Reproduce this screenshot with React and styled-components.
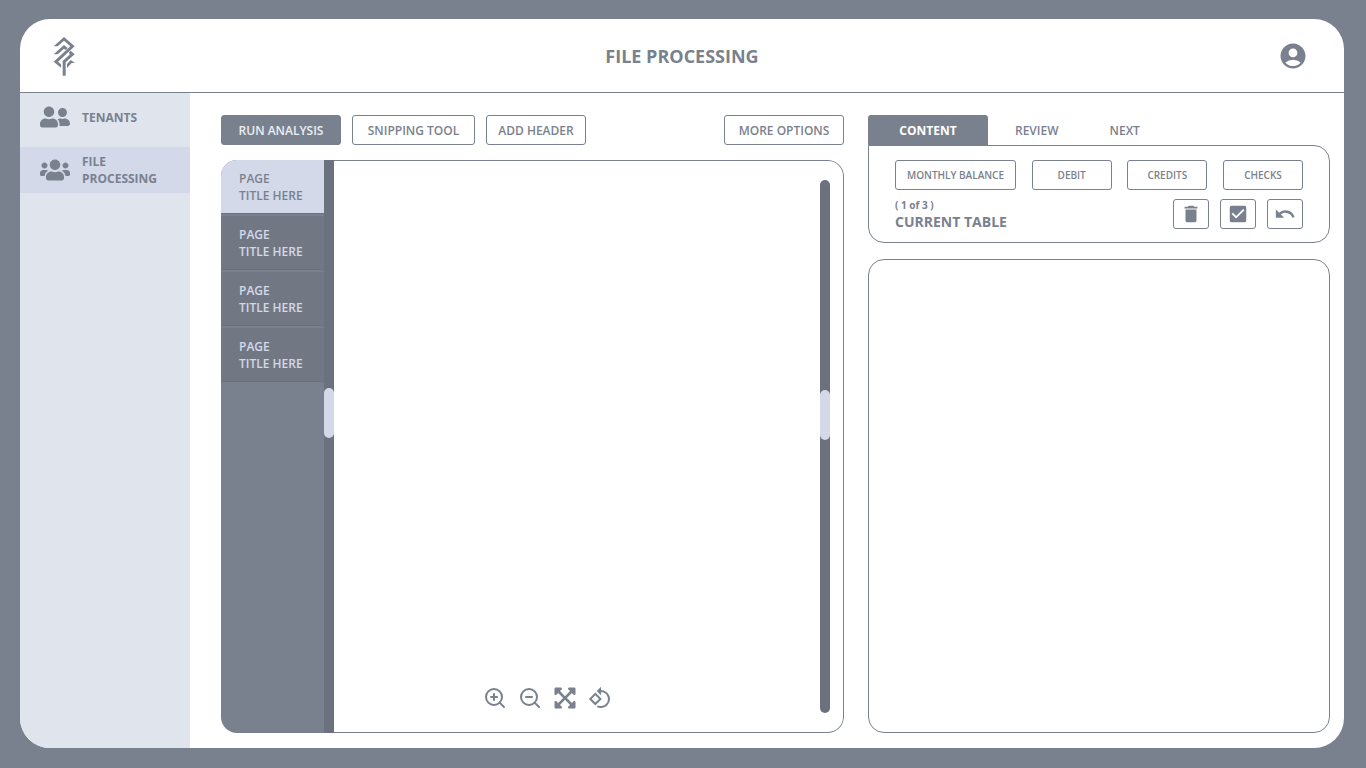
import React, { useState } from "react";
import styled, { createGlobalStyle, css } from "styled-components";
import { FaUserFriends, FaUsers, FaExpandArrowsAlt } from "react-icons/fa";
import { FiZoomIn, FiZoomOut } from "react-icons/fi";
import { MdAccountCircle, MdDelete, MdCheckBox, MdUndo, MdRotate90DegreesCcw } from "react-icons/md";

const slate = "#7a818e";
const dark = "#6b717d";
const pale = "#d3d9e9";
const mist = "#e0e4ed";

const GlobalStyle = createGlobalStyle`
  * { box-sizing: border-box; }
  body {
    margin: 0;
    background: ${slate};
    color: ${slate};
    font-family: "Open Sans", "Liberation Sans", sans-serif;
    font-size: 12px;
    line-height: 17px;
  }
  button {
    margin: 0;
    padding: 0;
    border: 0;
    background: none;
    color: inherit;
    font: inherit;
    cursor: pointer;
  }
  svg { display: block; flex: none; }
`;

const Page = styled.div`
  display: flex;
  min-height: 100vh;
  padding: 19px 22px 20px 20px;
`;

const Shell = styled.div`
  flex: 1;
  display: flex;
  flex-direction: column;
  overflow: hidden;
  border-radius: 30px;
  background: #fff;
`;

const Header = styled.header`
  display: grid;
  grid-template-columns: 1fr auto 1fr;
  align-items: center;
  height: 74px;
  padding: 0 32px;
  border-bottom: 1px solid ${slate};
`;

const Title = styled.h1`
  margin: 0;
  font-size: 18px;
  line-height: 24px;
  font-weight: 700;
`;

const AccountButton = styled.button`
  display: grid;
  place-items: center;
  justify-self: end;
  width: 38px;
  height: 38px;
`;

const Body = styled.div`
  flex: 1;
  display: flex;
`;

const Sidebar = styled.nav`
  display: flex;
  flex-direction: column;
  gap: 7px;
  width: 170px;
  padding-top: 1px;
  background: ${mist};
`;

const NavLink = styled.a`
  display: flex;
  align-items: center;
  gap: 12px;
  height: 46px;
  padding: 0 20px;
  background: ${(p) => (p.$active ? pale : "transparent")};
  color: ${slate};
  font-weight: 700;
  text-decoration: none;
`;

const Main = styled.main`
  flex: 1;
  display: grid;
  grid-template-columns: minmax(0, 623fr) minmax(0, 462fr);
  gap: 24px;
  padding: 22px 14px 15px 31px;
`;

const Column = styled.section`
  display: flex;
  flex-direction: column;
`;

const ActionBar = styled.div`
  display: flex;
  gap: 11px;
  margin-bottom: 15px;
`;

const Button = styled.button`
  height: 30px;
  width: ${(p) => p.$width || "auto"};
  border: 1px solid ${slate};
  border-radius: 3px;
  font-size: 12px;
  font-weight: 600;
  white-space: nowrap;
  ${(p) => p.$primary && css`
    background: ${slate};
    color: #eceef2;
  `}
  ${(p) => p.$end && css`
    margin-left: auto;
  `}
`;

const Document = styled.div`
  flex: 1;
  display: flex;
  overflow: hidden;
  border-radius: 16px;
`;

const PageList = styled.div`
  display: flex;
  flex-direction: column;
  gap: 2px;
  width: 103px;
  background: ${slate};
`;

const PageItem = styled.button`
  height: 54px;
  padding: 0 18px;
  border-bottom: 1px solid ${dark};
  background: ${(p) => (p.$active ? pale : "#727883")};
  color: ${(p) => (p.$active ? slate : pale)};
  font-weight: 600;
  text-align: left;
  white-space: nowrap;
`;

const Track = styled.div`
  position: relative;
  width: 10px;
  border-radius: ${(p) => (p.$round ? "5px" : "0")};
  background: ${dark};
`;

const Thumb = styled.div`
  position: absolute;
  top: ${(p) => p.$top};
  width: 10px;
  height: 50px;
  border-radius: 5px;
  background: ${pale};
`;

const Viewer = styled.div`
  flex: 1;
  display: flex;
  padding: 19px 13px 19px 0;
  border: 1px solid ${slate};
  border-left: 0;
  border-radius: 0 16px 16px 0;
`;

const Canvas = styled.div`
  flex: 1;
  display: flex;
  align-items: flex-end;
  justify-content: center;
`;

const ViewTools = styled.div`
  display: flex;
  gap: 11px;
  padding: 0 60px 3px 0;
`;

const Tabs = styled.div`
  display: flex;
  height: 30px;
`;

const Tab = styled.button`
  padding: 0 27px;
  font-weight: 600;
  ${(p) => p.$active && css`
    width: 120px;
    border-radius: 3px 3px 0 0;
    background: ${slate};
    color: #fff;
    font-weight: 700;
  `}
  & + & + & {
    padding: 0 24px;
  }
`;

const Card = styled.div`
  display: flex;
  flex-direction: column;
  gap: 9px;
  height: 98px;
  margin-bottom: 16px;
  padding: 14px 26px;
  border: 1px solid ${slate};
  border-radius: 0 16px 16px 16px;
`;

const Row = styled.div`
  display: flex;
  align-items: flex-start;
  justify-content: space-between;
`;

const FilterButton = styled(Button)`
  font-size: 10px;
`;

const TableName = styled.h2`
  margin: 0;
  font-size: 14px;
  line-height: 22px;
  font-weight: 700;
`;

const Count = styled.p`
  margin: 0;
  font-size: 10px;
  line-height: 12px;
  font-weight: 700;
`;

const IconGroup = styled.div`
  display: flex;
  gap: 11px;
`;

const IconButton = styled(Button)`
  display: grid;
  place-items: center;
  width: 36px;
`;

const Result = styled.div`
  flex: 1;
  border: 1px solid ${slate};
  border-radius: 16px;
`;

function Logo() {
  return (
    <svg width="24" height="40" viewBox="7 5 72 120" fill={slate} role="img" aria-label="Logo">
      <path d="M12 36 L43 8 L75 36 L25 82 L34 90 V100 L12 82 L62 36 L43 19 L24 36 Z" />
      <path d="M12 60 L43 32 L54 41 L48 47 L43 43 L24 60 Z" />
      <path d="M39 124 V80 L61 60 L57 55 L63 49 L75 60 L48 84 V124 Z" />
      <path d="M52 101 V89 L63 77 L76 86 H66 Z" />
    </svg>
  );
}

const pages = [1, 2, 3, 4];
const tabs = ["CONTENT", "REVIEW", "NEXT"];

export default function App() {
  const [page, setPage] = useState(1);
  const [tab, setTab] = useState("CONTENT");
  return (
    <>
      <GlobalStyle />
      <Page>
        <Shell>
          <Header>
            <Logo />
            <Title>FILE PROCESSING</Title>
            <AccountButton aria-label="Account"><MdAccountCircle size={30} /></AccountButton>
          </Header>
          <Body>
            <Sidebar>
              <NavLink href="#tenants"><FaUserFriends size={30} />TENANTS</NavLink>
              <NavLink href="#files" $active><FaUsers size={30} />FILE PROCESSING</NavLink>
            </Sidebar>
            <Main>
              <Column>
                <ActionBar>
                  <Button $primary $width="120px">RUN ANALYSIS</Button>
                  <Button $width="123px">SNIPPING TOOL</Button>
                  <Button $width="100px">ADD HEADER</Button>
                  <Button $end $width="120px">MORE OPTIONS</Button>
                </ActionBar>
                <Document>
                  <PageList>
                    {pages.map((n) => (
                      <PageItem key={n} $active={n === page} onClick={() => setPage(n)}>
                        PAGE<br />TITLE HERE
                      </PageItem>
                    ))}
                  </PageList>
                  <Track><Thumb $top="228px" /></Track>
                  <Viewer>
                    <Canvas>
                      <ViewTools>
                        <button aria-label="Zoom in"><FiZoomIn size={24} /></button>
                        <button aria-label="Zoom out"><FiZoomOut size={24} /></button>
                        <button aria-label="Fit to screen"><FaExpandArrowsAlt size={24} /></button>
                        <button aria-label="Rotate"><MdRotate90DegreesCcw size={24} /></button>
                      </ViewTools>
                    </Canvas>
                    <Track $round><Thumb $top="210px" /></Track>
                  </Viewer>
                </Document>
              </Column>
              <Column>
                <Tabs role="tablist">
                  {tabs.map((t) => (
                    <Tab key={t} role="tab" aria-selected={t === tab} $active={t === tab} onClick={() => setTab(t)}>{t}</Tab>
                  ))}
                </Tabs>
                <Card>
                  <Row>
                    <FilterButton $width="121px">MONTHLY BALANCE</FilterButton>
                    <FilterButton $width="80px">DEBIT</FilterButton>
                    <FilterButton $width="80px">CREDITS</FilterButton>
                    <FilterButton $width="80px">CHECKS</FilterButton>
                  </Row>
                  <Row>
                    <div>
                      <Count>( 1 of 3 )</Count>
                      <TableName>CURRENT TABLE</TableName>
                    </div>
                    <IconGroup>
                      <IconButton aria-label="Delete"><MdDelete size={22} /></IconButton>
                      <IconButton aria-label="Select"><MdCheckBox size={22} /></IconButton>
                      <IconButton aria-label="Undo"><MdUndo size={22} /></IconButton>
                    </IconGroup>
                  </Row>
                </Card>
                <Result />
              </Column>
            </Main>
          </Body>
        </Shell>
      </Page>
    </>
  );
}
